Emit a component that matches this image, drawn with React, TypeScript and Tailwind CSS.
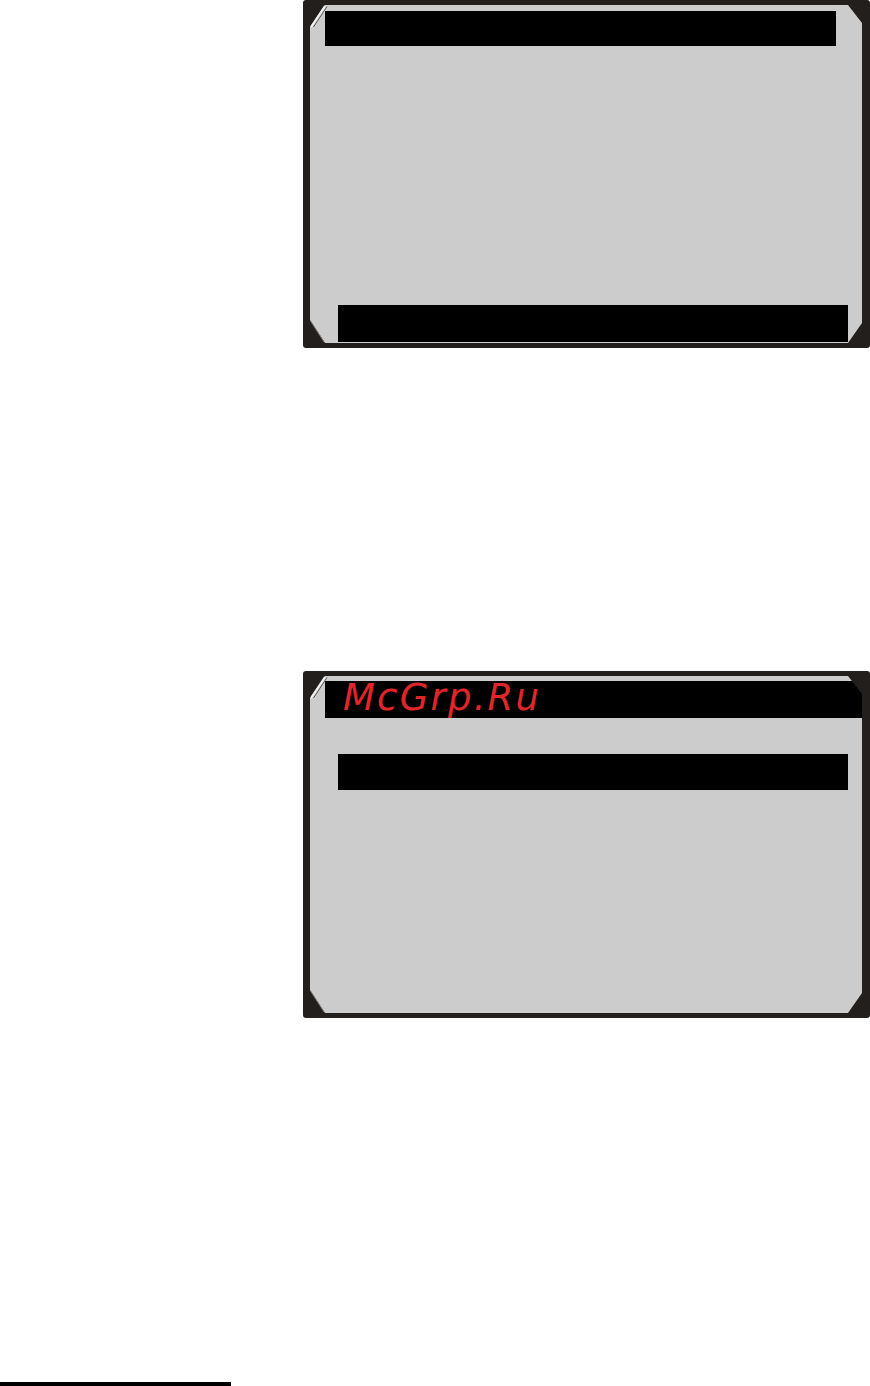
import React from "react";

const DARK = "#231f1c";

function Corners() {
  return (
    <>
      <svg className="absolute left-0 top-0" width="18" height="24" viewBox="0 0 18 24">
        <polygon points="0,0 15,0 0,22" fill={DARK} />
        <line x1="1" y1="22" x2="15" y2="1" stroke="#f2f2f2" strokeWidth="2" />
        <line x1="3.5" y1="22" x2="17" y2="1.5" stroke="#555" strokeWidth="1" />
      </svg>
      <svg className="absolute right-0 top-0" width="14" height="20" viewBox="0 0 14 20">
        <polygon points="0,0 14,0 14,18" fill={DARK} />
      </svg>
      <svg className="absolute left-0 bottom-0" width="16" height="24" viewBox="0 0 16 24">
        <polygon points="0,1 0,24 15,24" fill={DARK} />
        <line x1="0.5" y1="2" x2="14" y2="23" stroke="#777" strokeWidth="1" />
      </svg>
      <svg className="absolute right-0 bottom-0" width="14" height="20" viewBox="0 0 14 20">
        <polygon points="14,0 14,20 0,20" fill={DARK} />
      </svg>
    </>
  );
}

export default function App() {
  return (
    <div className="w-[870px] h-[1386px] bg-white flex flex-col" style={{ fontFamily: "'DejaVu Sans', sans-serif" }}>
      <div className="ml-[303px] w-[567px] h-[348px] border-l-[7px] border-r-[8px] border-t-[5px] border-b-[5px] border-[#231f1c] rounded-[3px] bg-[#cccccc] relative flex flex-col">
        <Corners />
        <div className="ml-[15px] mt-[6px] w-[511px] h-[35px] bg-black" />
        <div className="flex-1" />
        <div className="ml-[28px] mb-[1px] w-[510px] h-[37px] bg-black" />
      </div>
      <div className="mt-[323px] ml-[303px] w-[567px] h-[347px] border-l-[7px] border-r-[8px] border-t-[5px] border-b-[5px] border-[#231f1c] rounded-[3px] bg-[#cccccc] relative flex flex-col">
        <Corners />
        <div className="ml-[15px] mt-[5px] h-[37px] bg-black flex items-start overflow-visible">
          <span className="ml-[18px] -mt-[2px] text-[37px] leading-none italic tracking-[2.2px] text-[#e0252b]" style={{ fontFamily: "'DejaVu Sans', sans-serif" }}>
            McGrp.Ru
          </span>
        </div>
        <div className="ml-[28px] mt-[36px] w-[510px] h-[36px] bg-black" />
      </div>
      <div className="mt-[364px] w-[231px] h-[4px] bg-black" />
    </div>
  );
}
